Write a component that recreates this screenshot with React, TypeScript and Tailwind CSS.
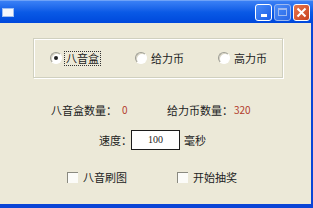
import React from 'react'

const font = { fontFamily: '"Noto Sans CJK SC", "Noto Sans", sans-serif' }

function Radio({ checked, label, focus }: { checked?: boolean; label: string; focus?: boolean }) {
    return (
        <div className="flex items-center">
            <div className="w-[12px] h-[12px] rounded-full border border-t-[#9c9c92] border-l-[#9c9c92] border-r-white border-b-white bg-white flex items-center justify-center shadow-[inset_1px_1px_0_#d8d4c4]">
                {checked && <div className="w-[4px] h-[4px] rounded-full bg-[#222]" />}
            </div>
            <span
                className={`ml-[3px] text-[11px] leading-[11px] text-[#222] px-[1px] py-[1px] whitespace-nowrap ${focus ? 'outline outline-1 outline-dotted outline-[#333]' : ''}`}
            >
                {label}
            </span>
        </div>
    )
}

function Check({ label }: { label: string }) {
    return (
        <div className="flex items-center">
            <div className="w-[11px] h-[11px] border-t border-l border-t-[#8a8a80] border-l-[#8a8a80] bg-[#fbfbf8]" />
            <span className="ml-[5px] text-[11px] leading-[12px] text-[#222] whitespace-nowrap">{label}</span>
        </div>
    )
}

export default function App() {
    return (
        <div className="w-[313px] h-[208px] flex flex-col overflow-hidden bg-[#0a45d6]" style={font}>
            {/* Title bar */}
            <div className="h-[23px] shrink-0 flex items-center bg-gradient-to-b from-[#3a80f5] via-[#0a5ae6] to-[#0048dc] border-t border-[#6ea2f8]">
                <div className="ml-[2px] w-[12px] h-[9px] bg-[#f4f6fb] border border-[#9fbef0]" />
                <div className="flex-1" />
                <div className="flex items-center gap-[2px] mr-[3px]">
                    <div className="w-[17px] h-[17px] rounded-[3px] border border-white bg-gradient-to-br from-[#4a8cf8] to-[#1c5ee8] flex items-end justify-center pb-[3px]">
                        <div className="w-[6px] h-[3px] bg-white" />
                    </div>
                    <div className="w-[17px] h-[17px] rounded-[3px] border border-[#9cb8f0] bg-gradient-to-br from-[#4a8cf8] to-[#2a66e6] flex items-center justify-center">
                        <div className="w-[9px] h-[8px] border border-[#9cb8f0] border-t-2" />
                    </div>
                    <div className="w-[17px] h-[17px] rounded-[3px] border border-white bg-gradient-to-br from-[#e8764c] to-[#c8401c] flex items-center justify-center">
                        <svg width="11" height="11" viewBox="0 0 11 11">
                            <path d="M1.5 1.5 L9.5 9.5 M9.5 1.5 L1.5 9.5" stroke="white" strokeWidth="2" />
                        </svg>
                    </div>
                </div>
            </div>

            {/* Body */}
            <div className="flex-1 bg-[#ece9d8] mr-[2px] mb-[4px] flex flex-col pt-[15px] pl-[33px] text-[#222]">
                {/* Group box */}
                <div className="w-[250px] h-[40px] border border-[#d0d0bf] shadow-[inset_1px_1px_0_#fff,1px_1px_0_#fff] flex items-center pl-[16px]">
                    <div className="w-[85px]">
                        <Radio checked focus label="八音盒" />
                    </div>
                    <div className="w-[83px]">
                        <Radio label="给力币" />
                    </div>
                    <Radio label="高力币" />
                </div>

                {/* Counts */}
                <div className="mt-[26px] h-[12px] flex items-center text-[11px] leading-[12px] whitespace-nowrap">
                    <span className="ml-[18px] w-[71px]">八音盒数量：</span>
                    <span className="w-[45px] text-[10px] text-[#b23c2c]">0</span>
                    <span className="w-[67px]">给力币数量：</span>
                    <span className="text-[10px] text-[#b23c2c]">320</span>
                </div>

                {/* Speed */}
                <div className="mt-[14px] flex items-center text-[11px] leading-[12px] whitespace-nowrap">
                    <span className="ml-[66px] w-[32px] shrink-0">速度：</span>
                    <div className="w-[49px] h-[20px] shrink-0 bg-white border border-[#1c1c1c] flex items-center justify-center text-[10px] font-['Liberation_Serif',serif]">
                        100
                    </div>
                    <span className="ml-[4px]">毫秒</span>
                </div>

                {/* Checkboxes */}
                <div className="mt-[21px] flex items-center">
                    <div className="ml-[34px] w-[110px]">
                        <Check label="八音刷图" />
                    </div>
                    <Check label="开始抽奖" />
                </div>
            </div>
        </div>
    )
}
